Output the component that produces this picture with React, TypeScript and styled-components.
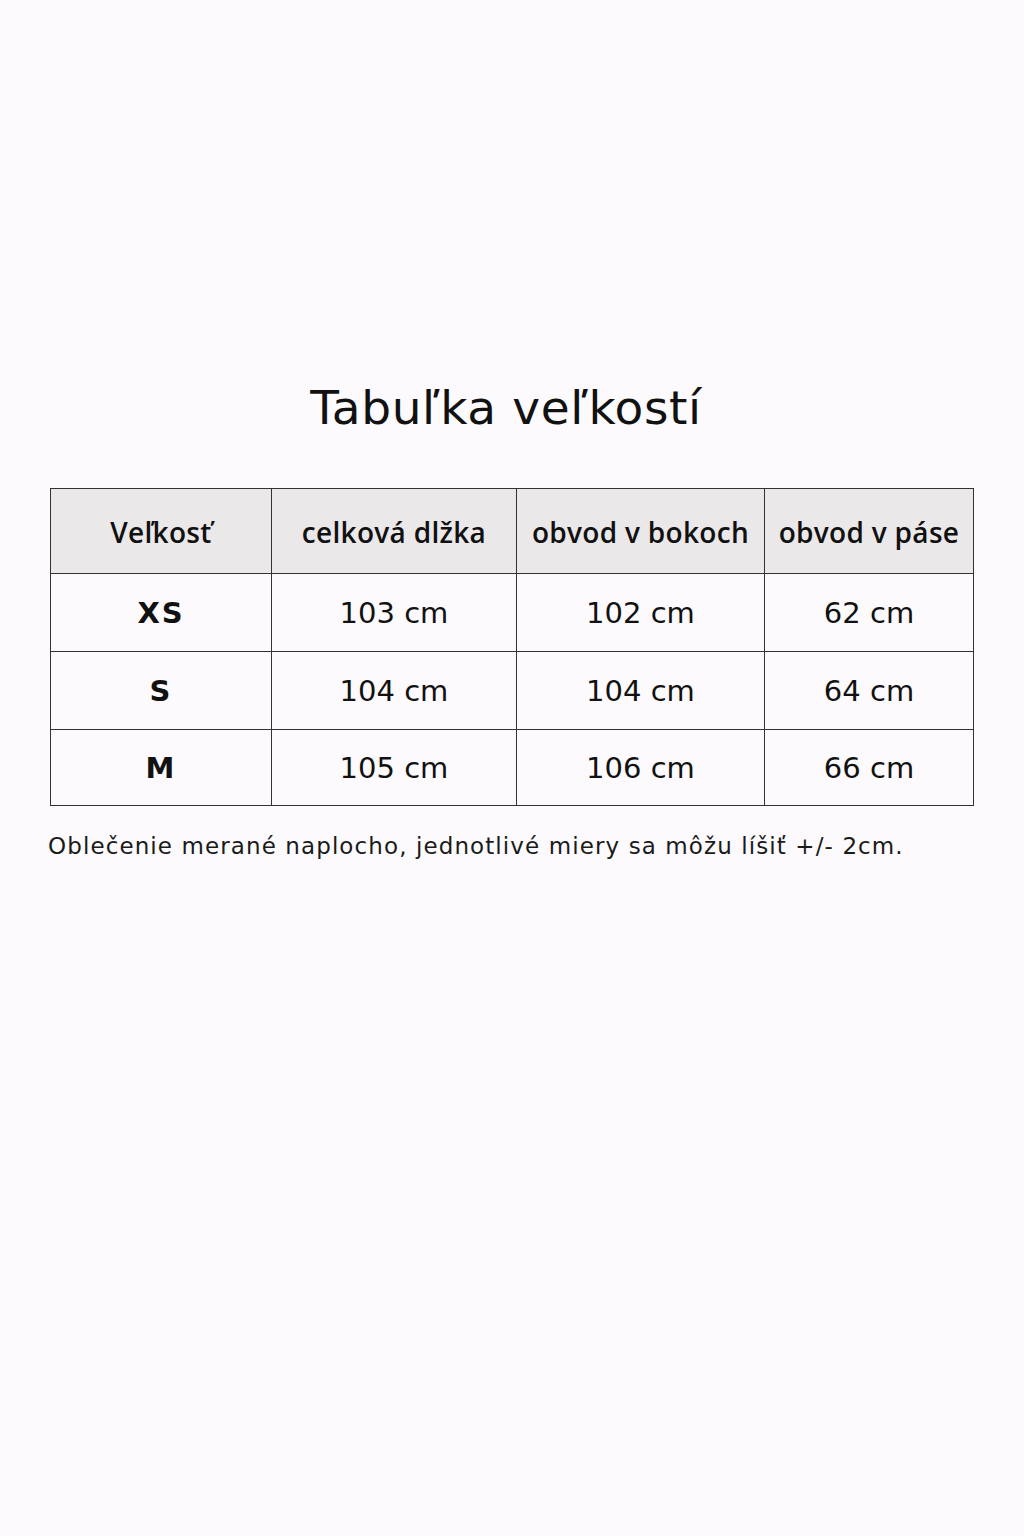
import styled, { createGlobalStyle } from "styled-components";

const GlobalStyle = createGlobalStyle`
  html, body {
    margin: 0;
    padding: 0;
    background: #fcfafc;
  }
`;

const Page = styled.div`
  width: 1024px;
  height: 1536px;
  box-sizing: border-box;
  padding: 380px 0 0 50px;
  background: #fcfafc;
  color: #111;
  font-family: "DejaVu Sans", "Noto Sans", sans-serif;
`;

const Title = styled.h1`
  width: 924px;
  margin: 0 0 52px 0;
  padding-right: 12px;
  box-sizing: border-box;
  text-align: center;
  font-size: 47px;
  font-weight: 400;
  line-height: 56px;
  letter-spacing: 0.6px;
`;

const SizeGrid = styled.div`
  display: grid;
  grid-template-columns: 221px 245px 248px 209px;
  grid-template-rows: 85px 78px 78px 76px;
  width: max-content;
  border-top: 1px solid #333;
  border-left: 1px solid #333;
`;

const Cell = styled.div<{ $head?: boolean; $bold?: boolean }>`
  display: flex;
  align-items: center;
  justify-content: center;
  box-sizing: border-box;
  border-right: 1px solid #333;
  border-bottom: 1px solid #333;
  background: ${(p) => (p.$head ? "#ebe8ea" : "transparent")};
  font-family: ${(p) =>
    p.$head ? `"Open Sans", "Noto Sans", sans-serif` : `"DejaVu Sans", sans-serif`};
  font-size: ${(p) => (p.$head ? "28px" : p.$bold ? "29px" : "29px")};
  font-weight: ${(p) => (p.$head ? 600 : p.$bold ? 700 : 400)};
  letter-spacing: ${(p) => (p.$head ? "0.3px" : p.$bold ? "2px" : "0px")};
  padding-top: ${(p) => (p.$head ? "2px" : "0")};
`;

const Note = styled.p`
  margin: 27px 0 0 -2px;
  font-family: "DejaVu Sans", sans-serif;
  font-size: 23px;
  line-height: 27px;
  letter-spacing: 1.1px;
  color: #1a1a1a;
`;

const columns = ["Veľkosť", "celková dlžka", "obvod v bokoch", "obvod v páse"];

const rows = [
  { size: "XS", values: ["103 cm", "102 cm", "62 cm"] },
  { size: "S", values: ["104 cm", "104 cm", "64 cm"] },
  { size: "M", values: ["105 cm", "106 cm", "66 cm"] },
];

const App = () => {
  return (
    <>
      <GlobalStyle />
      <Page>
        <Title>Tabuľka veľkostí</Title>
        <SizeGrid>
          {columns.map((c) => (
            <Cell key={c} $head>
              {c}
            </Cell>
          ))}
          {rows.map((r) => [
            <Cell key={r.size} $bold>
              {r.size}
            </Cell>,
            ...r.values.map((v, i) => <Cell key={r.size + i}>{v}</Cell>),
          ])}
        </SizeGrid>
        <Note>Oblečenie merané naplocho, jednotlivé miery sa môžu líšiť +/- 2cm.</Note>
      </Page>
    </>
  );
};

export default App;
